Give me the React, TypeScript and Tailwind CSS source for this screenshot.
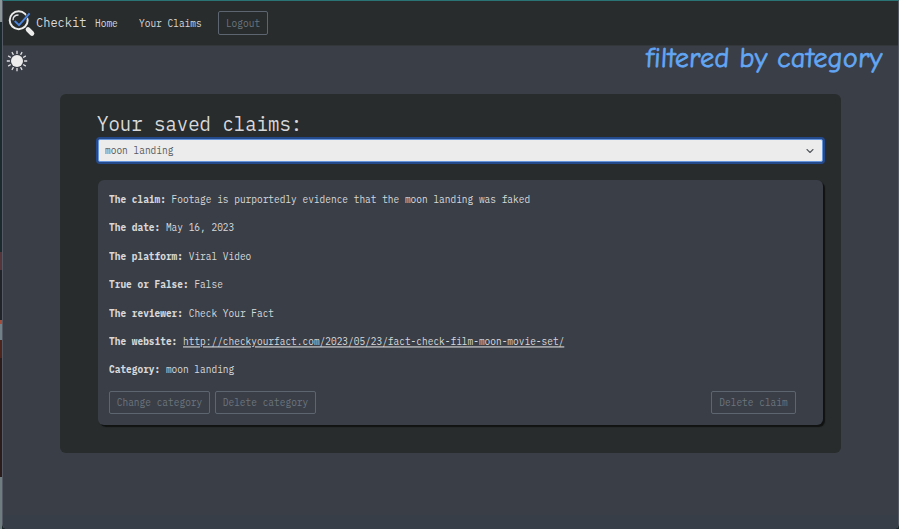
import React from "react";

const claim = [
  ["The claim:", "Footage is purportedly evidence that the moon landing was faked"],
  ["The date:", "May 16, 2023"],
  ["The platform:", "Viral Video"],
  ["True or False:", "False"],
  ["The reviewer:", "Check Your Fact"],
  ["The website:", "http://checkyourfact.com/2023/05/23/fact-check-film-moon-movie-set/"],
  ["Category:", "moon landing"],
];

function Logo() {
  return (
    <svg className="h-[28px] w-[28px] shrink-0" viewBox="0 0 28 28" fill="none">
      <path d="M20 20.5 24 24.5" stroke="#ececec" strokeWidth="4.6" strokeLinecap="round" />
      <circle cx="10.7" cy="11.2" r="9" stroke="#ececec" strokeWidth="2" />
      <path d="M5 11.2C5 8 7.2 6 10.5 6" stroke="#e3e5e8" strokeWidth="1.3" />
      <path d="M7.2 12.2 11 16 20.7 5.2" stroke="#282b2b" strokeWidth="3" />
      <path d="M6.7 12 11 16.2 21.6 4.4" stroke="#4c83dc" strokeWidth="1.9" />
    </svg>
  );
}

function Sun() {
  const rays = Array.from({ length: 12 }, (_, i) => i * 30);
  return (
    <svg className="block h-[22px] w-[22px]" viewBox="0 0 22 22">
      <circle cx="11" cy="11" r="6" fill="#ededed" />
      {rays.map((r) => (
        <path key={r} d="M11 .8V3.9" stroke="#dfe1e4" strokeWidth="1.3" transform={`rotate(${r} 11 11)`} />
      ))}
    </svg>
  );
}

function Button({ children, className = "" }: { children: React.ReactNode; className?: string }) {
  return (
    <button
      className={`flex items-center justify-center rounded-[2px] border border-[#5d6670] pt-[2px] text-[9.5px] text-[#6c757d] ${className}`}
    >
      <span className="scale-y-[1.1]">{children}</span>
    </button>
  );
}

export default function App() {
  return (
    <div className="flex h-[529px] w-[899px] overflow-hidden bg-[#1b2628] font-['IBM_Plex_Mono','Liberation_Mono',monospace] text-[#d8d9da]">
      <div className="flex w-[2px] shrink-0 flex-col">
        <div className="h-[22px] bg-[#8b9698]" />
        <div className="h-[230px] bg-[#1b2a2c]" />
        <div className="h-[18px] bg-[#55343a]" />
        <div className="h-[50px] bg-[#202428]" />
        <div className="h-[4px] bg-[#a14d3c]" />
        <div className="h-[16px] bg-[#728087]" />
        <div className="h-[18px] bg-[#4c241c]" />
        <div className="h-[119px] bg-[#2a1c1b]" />
        <div className="flex-1 bg-[#6f7c80]" />
      </div>
      <div className="relative flex min-w-0 flex-1 flex-col overflow-hidden rounded-b-[5px] border-x border-t border-x-[#555963] border-t-[#2b7476] bg-[#3a3e47]">
        <nav className="flex h-[45px] shrink-0 items-center border-b border-[#333739] bg-[#282c2c] pl-[5px]">
          <Logo />
          <span className="w-[59px] scale-y-[1.08] text-[12px] leading-none">Checkit</span>
          <span className="w-[44px] scale-y-[1.1] pt-[1px] text-[9.5px] leading-none">Home</span>
          <span className="w-[79px] scale-y-[1.1] pt-[1px] text-[9.5px] leading-none">Your Claims</span>
          <Button className="h-[24px] w-[50px]">Logout</Button>
        </nav>

        <div className="h-[48px] shrink-0 pl-[3px] pt-[4px]">
          <Sun />
        </div>

        <span className="absolute left-[643px] top-[37px] origin-left -skew-x-3 whitespace-nowrap font-['Comic_Neue',Lato,sans-serif] text-[28px] leading-[40px] font-normal tracking-[0.35px] text-[#62a7f5] [-webkit-text-stroke:0.7px_#62a7f5]">
          filtered by category
        </span>

        <main className="ml-[57px] h-[359px] w-[781px] shrink-0 rounded-[6px] bg-[#282c2c] pl-[37px] pt-[19px]">
          <h1 className="h-[26px] scale-y-[1.08] text-[19px] leading-[23px]">Your saved claims:</h1>
          <div className="ml-px flex h-[23px] w-[725px] items-center justify-between rounded-[2px] border border-[#6795dc] bg-[#ececec] pl-[6px] pr-[7px] text-[9.5px] text-[#575b60] shadow-[0_0_0_2px_#244a8c]">
            <span className="scale-y-[1.1] pt-[2px]">moon landing</span>
            <svg className="h-[10px] w-[10px]" viewBox="0 0 10 10" fill="none">
              <path d="M2 3.5 5 6.5 8 3.5" stroke="#555a60" strokeWidth="1.1" strokeLinecap="round" strokeLinejoin="round" />
            </svg>
          </div>

          <section className="mt-[18px] ml-px h-[245px] w-[725px] rounded-[6px] bg-[#3a3e47] px-[11px] pt-[6px] shadow-[2px_2px_1px_#111313]">
            {claim.map(([label, value]) => (
              <p key={label} className="h-[28.4px] origin-center scale-y-[1.1] whitespace-pre text-[9.49px] leading-[28.6px]">
                <strong>{label}</strong>{" "}
                {label === "The website:" ? (
                  <a className="underline underline-offset-[1px]">{value}</a>
                ) : (
                  value
                )}
              </p>
            ))}
            <div className="mt-[6px] flex">
              <Button className="h-[23px] w-[101px]">Change category</Button>
              <Button className="ml-[5px] h-[23px] w-[101px]">Delete category</Button>
              <Button className="mr-[16px] ml-auto h-[23px] w-[85px]">Delete claim</Button>
            </div>
          </section>
        </main>
        <div className="flex-1" />
        <div className="h-[14px] shrink-0 bg-[#383e47]" />
      </div>
    </div>
  );
}
